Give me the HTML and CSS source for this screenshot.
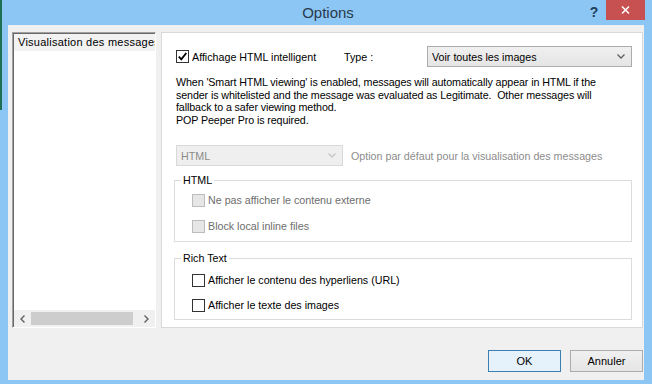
FILE: index.html
```html
<!DOCTYPE html>
<html>
<head>
    <meta charset="utf-8" />
    <title>Options</title>
    <link rel="stylesheet" href="styles.css">
</head>
<body>
    <div class="window">
        <div class="titlebar">
            <span class="title">Options</span>
            <span class="help">?</span>
            <span class="close">
                <svg width="9" height="8" viewBox="0 0 9 8"><path d="M1 0.5 L8 7.5 M8 0.5 L1 7.5" stroke="#fff" stroke-width="1.5" fill="none" /></svg>
            </span>
        </div>
        <div class="client">
            <div class="panes">
                <div class="tree">
                    <div class="tree_list">
                        <div class="tree_item">Visualisation des messages</div>
                    </div>
                    <div class="hscroll">
                        <span class="arrow">
                            <svg width="5" height="8" viewBox="0 0 5 8"><path d="M4.5 0.5 L1 4 L4.5 7.5" stroke="#606060" stroke-width="1.4" fill="none" /></svg>
                        </span>
                        <span class="track"><span class="thumb"></span></span>
                        <span class="arrow">
                            <svg width="5" height="8" viewBox="0 0 5 8"><path d="M0.5 0.5 L4 4 L0.5 7.5" stroke="#606060" stroke-width="1.4" fill="none" /></svg>
                        </span>
                    </div>
                </div>
                <div class="page">
                    <div class="row_top">
                        <label class="check check_main">
                            <span class="box">
                                <svg width="11" height="11" viewBox="0 0 11 11"><path d="M1.8 5.6 L4.3 8.4 L9.3 2" stroke="#000" stroke-width="1.8" fill="none" /></svg>
                            </span>
                            Affichage HTML intelligent
                        </label>
                        <span class="type_label">Type :</span>
                        <div class="combo combo_type">
                            <span>Voir toutes les images</span>
                            <svg width="8" height="5" viewBox="0 0 8 5"><path d="M0.5 0.5 L4 4 L7.5 0.5" stroke="#606060" stroke-width="1.3" fill="none" /></svg>
                        </div>
                    </div>
                    <p class="desc">
                        When 'Smart HTML viewing' is enabled, messages will automatically appear in HTML if the<br />
                        sender is whitelisted and the message was evaluated as Legitimate.&nbsp; Other messages will<br />
                        fallback to a safer viewing method.<br />
                        POP Peeper Pro is required.
                    </p>
                    <div class="row_default">
                        <div class="combo combo_off">
                            <span>HTML</span>
                            <svg width="8" height="5" viewBox="0 0 8 5"><path d="M0.5 0.5 L4 4 L7.5 0.5" stroke="#c4c4c4" stroke-width="1.3" fill="none" /></svg>
                        </div>
                        <span class="hint">Option par défaut pour la visualisation des messages</span>
                    </div>
                    <fieldset class="group group_html">
                        <legend>HTML</legend>
                        <label class="check check_off"><span class="box"></span>Ne pas afficher le contenu externe</label>
                        <label class="check check_off"><span class="box"></span>Block local inline files</label>
                    </fieldset>
                    <fieldset class="group group_rich">
                        <legend>Rich Text</legend>
                        <label class="check"><span class="box"></span>Afficher le contenu des hyperliens (URL)</label>
                        <label class="check"><span class="box"></span>Afficher le texte des images</label>
                    </fieldset>
                </div>
            </div>
            <div class="buttons">
                <button class="btn btn_default">OK</button>
                <button class="btn">Annuler</button>
            </div>
        </div>
    </div>
</body>
</html>
```

FILE: styles.css
```css
* {
    margin: 0;
    padding: 0;
    box-sizing: border-box;
}
html, body {
    width: 652px;
    height: 384px;
    overflow: hidden;
}
body {
    font-family: "Liberation Sans", Arial, sans-serif;
    font-size: 10.7px;
    color: #000;
    background: #8cc6f4;
}
.window {
    width: 652px;
    height: 384px;
    display: flex;
    flex-direction: column;
    background: #8cc6f4;
    border-left: 2px solid;
    border-image: linear-gradient(to bottom, #1f6f55 0, #1f6f55 110px, #8cc6f4 110px) 1;
}

/* title bar */
.titlebar {
    height: 25px;
    display: flex;
    align-items: flex-start;
}
.titlebar .title {
    flex: 1;
    text-align: center;
    padding-left: 67px;
    font-size: 15px;
    line-height: 25px;
    color: #2a3a4c;
}
.titlebar .help {
    width: 14px;
    margin: 4px 5px 0 0;
    font-size: 14px;
    font-weight: bold;
    line-height: 16px;
    text-align: center;
    color: #233c58;
}
.titlebar .close {
    width: 39px;
    height: 20px;
    margin-right: 7px;
    background: #c75050;
    display: flex;
    align-items: center;
    justify-content: center;
}

/* client area */
.client {
    flex: 1;
    margin: 0 8px 4px 6px;
    background: #f0f0f0;
    display: flex;
    flex-direction: column;
    padding: 7px 1px 0 4px;
}
.panes {
    height: 296px;
    display: flex;
    gap: 5px;
}

/* left tree */
.tree {
    width: 144px;
    display: flex;
    flex-direction: column;
    background: #fff;
    border: 1px solid;
    border-color: #a0a0a0 #fff #fff #a0a0a0;
    box-shadow: inset 1px 1px 0 #696969;
    padding: 1px 0 0 1px;
}
.tree_list {
    flex: 1;
    overflow: hidden;
}
.tree_item {
    height: 17px;
    line-height: 17px;
    padding-left: 4px;
    font-size: 11px;
    letter-spacing: 0.25px;
    white-space: nowrap;
    overflow: hidden;
    background: #f2f2f2;
}
.hscroll {
    height: 17px;
    display: flex;
    align-items: center;
    background: #f0f0f0;
}
.hscroll .arrow {
    width: 17px;
    display: flex;
    justify-content: center;
}
.hscroll .track {
    flex: 1;
    display: flex;
    align-items: center;
}
.hscroll .thumb {
    width: 102px;
    height: 13px;
    background: #cdcdcd;
}

/* right page */
.page {
    flex: 1;
    background: #fff;
    border: 1px solid #d9d9d9;
    padding: 0 10px 0 12px;
}
.row_top {
    margin: 13px 0 0 2px;
    height: 21px;
    display: flex;
    align-items: center;
}
.check {
    display: flex;
    align-items: center;
    gap: 3px;
    white-space: nowrap;
}
.check .box {
    width: 13px;
    height: 13px;
    border: 1px solid #333;
    background: #fff;
    display: flex;
    align-items: center;
    justify-content: center;
}
.check_main {
    width: 168px;
}
.type_label {
    width: 83px;
}
.combo {
    height: 21px;
    display: flex;
    align-items: center;
    justify-content: space-between;
    padding: 0 6px 0 4px;
    border: 1px solid #acacac;
    background: linear-gradient(to bottom, #f0f0f0 0%, #e5e5e5 100%);
}
.combo_type {
    width: 205px;
}
.desc {
    margin: 9px 0 0 2px;
    line-height: 12.6px;
    letter-spacing: -0.1px;
    white-space: nowrap;
}
.row_default {
    margin: 19px 0 0 2px;
    display: flex;
    align-items: center;
    gap: 8px;
}
.combo_off {
    width: 167px;
    border-color: #d9d9d9;
    background: #efefef;
    color: #8c8c8c;
}
.hint {
    color: #8c8c8c;
}

/* group boxes */
.group {
    margin: 0;
    border: 1px solid #dcdcdc;
    padding: 0 0 2px 6px;
    line-height: 13px;
}
.group legend {
    padding: 0 2px;
}
.group .check {
    margin-left: 11px;
    height: 26px;
}
.group_html {
    margin-top: 8px;
}
.group_rich {
    margin-top: 10px;
    padding-top: 3px;
    padding-bottom: 1px;
}
.group_rich .check {
    height: 25px;
}
.check_off {
    color: #6d6d6d;
}
.check_off .box {
    border-color: #bcbcbc;
    background: #e6e6e6;
}

/* buttons */
.buttons {
    margin-top: 22px;
    display: flex;
    justify-content: flex-end;
    gap: 9px;
}
.btn {
    width: 73px;
    height: 22px;
    font-family: "Liberation Sans", Arial, sans-serif;
    font-size: 11px;
    color: #000;
    border: 1px solid #acacac;
    background: linear-gradient(to bottom, #f0f0f0 0%, #e5e5e5 100%);
}
.btn_default {
    border-color: #3c7fb1;
    background: #e5f1fb;
}
```
